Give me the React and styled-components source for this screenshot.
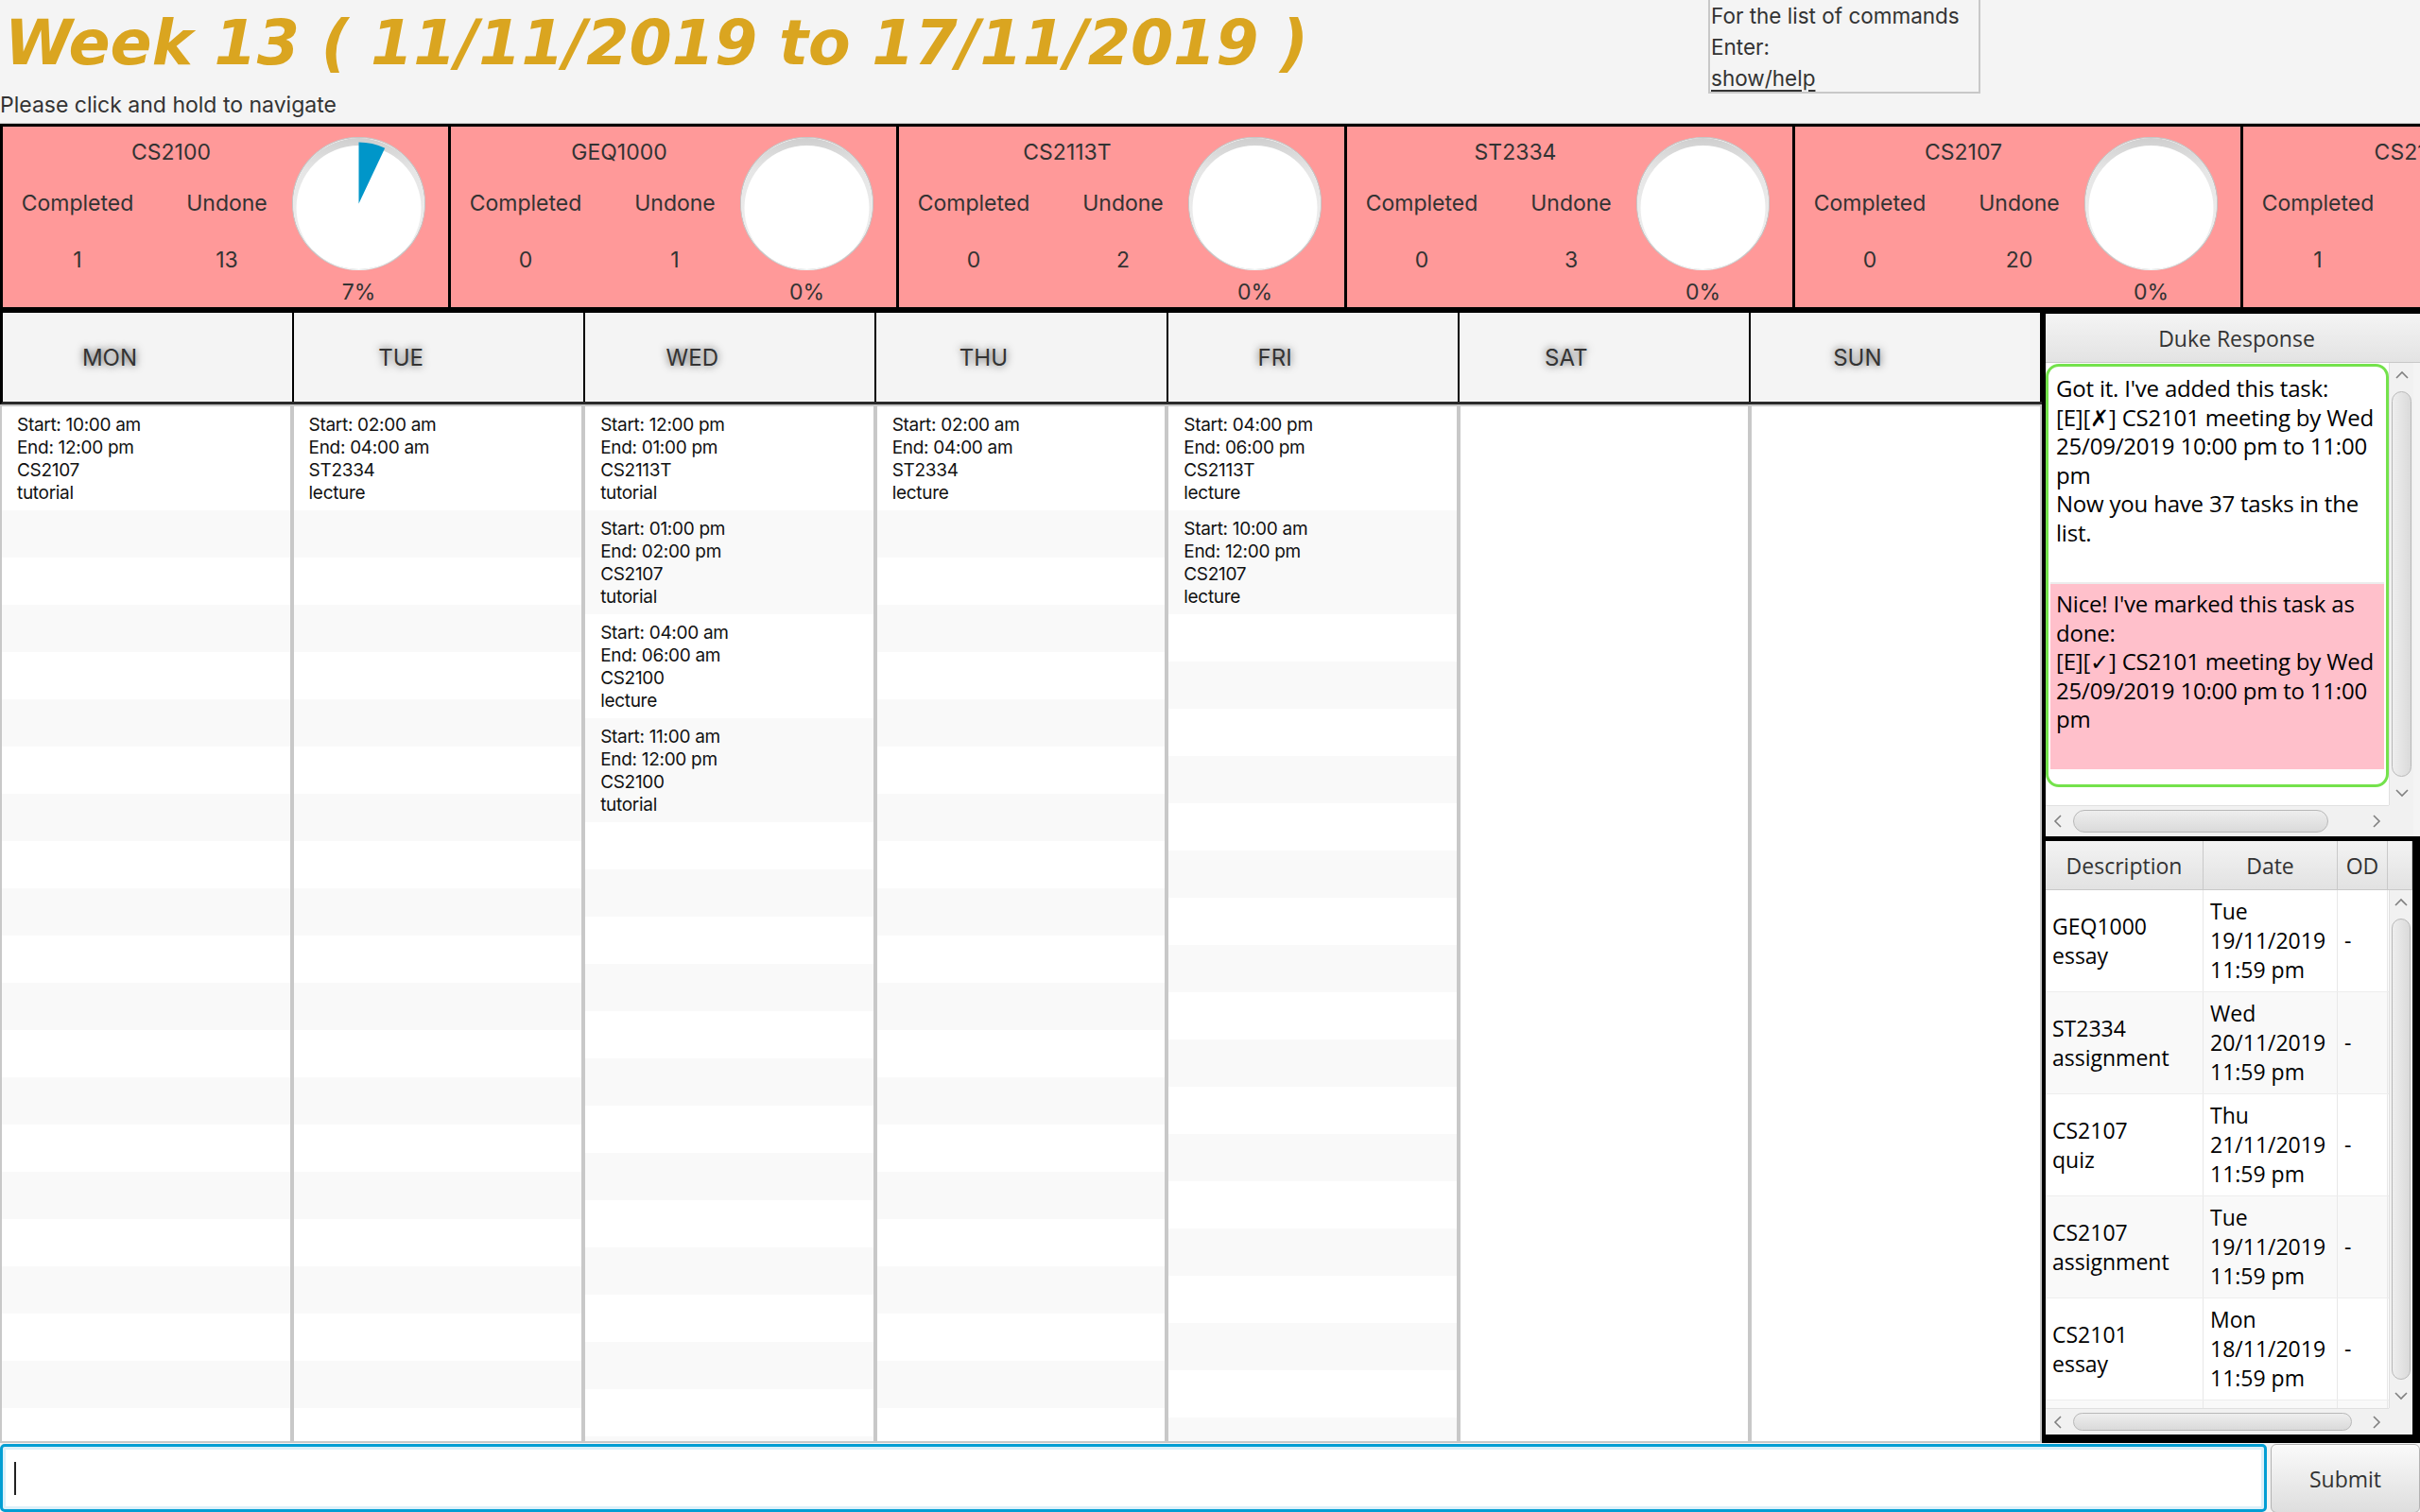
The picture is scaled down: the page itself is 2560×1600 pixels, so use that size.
import React from 'react';
import styled, { createGlobalStyle } from 'styled-components';

const SANS = `"Inter", "Noto Sans", sans-serif`;
const HUMAN = `"Open Sans", "DejaVu Sans", sans-serif`;

const GlobalStyle = createGlobalStyle`
  html, body { margin: 0; padding: 0; background: #f4f4f4; }
  body { width: 2560px; height: 1600px; overflow: hidden; }
  *, *::before, *::after { box-sizing: border-box; }
`;

const Screen = styled.div`
  width: 2560px;
  height: 1600px;
  display: flex;
  flex-direction: column;
  background: #f4f4f4;
  overflow: hidden;
  font-family: ${SANS};
  color: #333;
`;

/* ---------- top bar ---------- */
const TopBar = styled.header`
  height: 130px;
  flex-shrink: 0;
  display: grid;
  grid-template-columns: 1807px 288px;
  align-items: start;
`;
const TitleBlock = styled.div`
  display: flex;
  flex-direction: column;
`;
const Title = styled.h1`
  margin: 8px 0 0 5px;
  font-family: "DejaVu Sans", sans-serif;
  font-weight: bold;
  font-style: italic;
  font-size: 65px;
  line-height: 75px;
  color: #daa520;
  white-space: nowrap;
`;
const Hint = styled.div`
  margin-top: 15px;
  font-size: 23px;
  line-height: 27px;
  color: #333;
  white-space: nowrap;
`;
const HelpBox = styled.div`
  height: 99px;
  border: 2px solid #c8c8c8;
  border-top: none;
  padding: 0 1px;
  font-size: 22.5px;
  line-height: 33px;
  color: #333;
  white-space: nowrap;
`;
const HelpLink = styled.div`
  display: inline-block;
  text-decoration: underline;
  text-underline-offset: 4px;
`;

/* ---------- module cards ---------- */
const CardStrip = styled.section`
  height: 198px;
  flex-shrink: 0;
  display: flex;
  overflow: hidden;
  border-top: 1px solid #c8c8c8;
`;
const Card = styled.div`
  flex: 0 0 474px;
  height: 197px;
  border: 3px solid #000;
  border-right: none;
  background: #ff9999;
  display: flex;
`;
const CardStats = styled.div`
  width: 306px;
  flex-shrink: 0;
  display: flex;
  flex-direction: column;
`;
const CardTitle = styled.div`
  padding: 13px 0 0 50px;
  text-align: center;
  font-size: 23px;
  line-height: 28px;
  white-space: nowrap;
`;
const StatGrid = styled.div`
  display: grid;
  grid-template-columns: 158px 148px;
  row-gap: 32px;
  margin-top: 26px;
  font-size: 23px;
  line-height: 28px;
`;
const StatCell = styled.div`
  text-align: center;
  padding-left: ${p => (p.$second ? 10 : 0)}px;
  white-space: nowrap;
`;
const PieBlock = styled.div`
  width: 141px;
  flex-shrink: 0;
  padding-top: 11px;
  display: flex;
  flex-direction: column;
  align-items: center;
`;
const Percent = styled.div`
  margin-top: 9px;
  font-size: 23px;
  line-height: 28px;
`;

const Pie = ({ pct }) => {
  const c = 70.5;
  const r = 65;
  const a = (pct / 100) * Math.PI * 2;
  const x2 = c + r * Math.sin(a);
  const y2 = c - r * Math.cos(a);
  const large = pct > 50 ? 1 : 0;
  return (
    <svg width="141" height="141" viewBox="0 0 141 141">
      <defs>
        <linearGradient id="crescent" x1="0" y1="0" x2="0" y2="1">
          <stop offset="0" stopColor="#cfcfcf" />
          <stop offset="0.25" stopColor="#e6e6e6" />
          <stop offset="1" stopColor="#f2f2f2" />
        </linearGradient>
      </defs>
      <circle cx={c} cy={c} r="70" fill="#fff" stroke="#c6c6c6" strokeWidth="1.2" />
      <path
        fillRule="evenodd"
        fill="url(#crescent)"
        d={`M ${c - 69.4} ${c} a 69.4 69.4 0 1 0 138.8 0 a 69.4 69.4 0 1 0 -138.8 0 Z M ${c - 66} ${c + 4.5} a 66 66 0 1 0 132 0 a 66 66 0 1 0 -132 0 Z`}
      />
      {pct > 0 && (
        <path
          fill="#0096c9"
          d={`M ${c} ${c} L ${c} ${c - r} A ${r} ${r} 0 ${large} 1 ${x2.toFixed(2)} ${y2.toFixed(2)} Z`}
        />
      )}
    </svg>
  );
};

const modules = [
  { code: 'CS2100', done: 1, undone: 13, pct: 7 },
  { code: 'GEQ1000', done: 0, undone: 1, pct: 0 },
  { code: 'CS2113T', done: 0, undone: 2, pct: 0 },
  { code: 'ST2334', done: 0, undone: 3, pct: 0 },
  { code: 'CS2107', done: 0, undone: 20, pct: 0 },
  { code: 'CS2101', done: 1, undone: 4, pct: 20 },
];

/* ---------- main area ---------- */
const Main = styled.div`
  flex: 1;
  min-height: 0;
  display: flex;
`;
const Calendar = styled.section`
  width: 2160px;
  flex-shrink: 0;
  display: flex;
  flex-direction: column;
`;
const DayHeader = styled.div`
  height: 100px;
  flex-shrink: 0;
  display: grid;
  grid-template-columns: repeat(7, 1fr);
  border-top: 3px solid #000;
  border-bottom: 3px solid #2a2a2a;
  border-left: 3px solid #000;
`;
const DayHead = styled.div`
  display: flex;
  align-items: center;
  border-right: 2px solid #000;
  background: #f4f4f4;
`;
const DayLabel = styled.span`
  width: 226px;
  text-align: center;
  font-size: 24px;
  color: #333;
  text-shadow: 0 0 8px rgba(0, 0, 0, 0.7);
`;
const DayBody = styled.div`
  flex: 1;
  min-height: 0;
  display: grid;
  grid-template-columns: repeat(7, 1fr);
`;
const DayList = styled.div`
  border: 2px solid #c8c8c8;
  background: #fff;
  overflow: hidden;
  display: flex;
  flex-direction: column;
`;
const SlotRow = styled.div`
  flex-shrink: 0;
  height: ${p => (p.$event ? 110 : 50)}px;
  background: ${p => (p.$odd ? '#f9f9f9' : '#fff')};
  padding: 8px 16px 6px;
  font-size: 19px;
  line-height: 24px;
  letter-spacing: -0.3px;
  color: #111;
  white-space: pre-line;
`;

const days = [
  { name: 'MON', events: [['10:00 am', '12:00 pm', 'CS2107', 'tutorial']] },
  { name: 'TUE', events: [['02:00 am', '04:00 am', 'ST2334', 'lecture']] },
  {
    name: 'WED',
    events: [
      ['12:00 pm', '01:00 pm', 'CS2113T', 'tutorial'],
      ['01:00 pm', '02:00 pm', 'CS2107', 'tutorial'],
      ['04:00 am', '06:00 am', 'CS2100', 'lecture'],
      ['11:00 am', '12:00 pm', 'CS2100', 'tutorial'],
    ],
  },
  { name: 'THU', events: [['02:00 am', '04:00 am', 'ST2334', 'lecture']] },
  {
    name: 'FRI',
    events: [
      ['04:00 pm', '06:00 pm', 'CS2113T', 'lecture'],
      ['10:00 am', '12:00 pm', 'CS2107', 'lecture'],
    ],
  },
  { name: 'SAT', events: [] },
  { name: 'SUN', events: [] },
];

/* ---------- side panel ---------- */
const SidePanel = styled.aside`
  width: 400px;
  flex-shrink: 0;
  display: flex;
  flex-direction: column;
  overflow: hidden;
`;
const DukeBox = styled.div`
  width: 412px;
  height: 557px;
  flex-shrink: 0;
  border: 4px solid #000;
  border-bottom: none;
  display: flex;
  flex-direction: column;
  background: #f4f4f4;
`;
const DukeHeader = styled.div`
  height: 52px;
  flex-shrink: 0;
  display: flex;
  align-items: center;
  justify-content: center;
  background: linear-gradient(#f4f4f4, #e3e3e3);
  border-bottom: 1px solid #c8c8c8;
  font-family: ${HUMAN};
  font-size: 23px;
  color: #333;
`;
const DukeScroll = styled.div`
  flex: 1;
  min-height: 0;
  display: grid;
  grid-template-columns: 363px 26px 1fr;
  grid-template-rows: 1fr 33px;
`;
const Viewport = styled.div`
  background: #fff;
  overflow: hidden;
`;
const MessageList = styled.div`
  height: 448px;
  margin-top: 1px;
  border: 3px solid #74e24c;
  border-radius: 14px;
  padding: 2px;
  background: #fff;
  overflow: hidden;
`;
const Message = styled.div`
  background: ${p => (p.$tone === 'pink' ? '#ffc0cb' : '#fff')};
  padding: 6px 4px 37px 6px;
  font-family: ${HUMAN};
  font-size: 24px;
  line-height: 30.5px;
  letter-spacing: -0.2px;
  color: #000;
  & + & {
    border-top: 2px solid #ececec;
  }
`;
const Line = styled.div`
  white-space: nowrap;
`;

const VTrack = styled.div`
  display: flex;
  flex-direction: column;
  align-items: stretch;
  background: #f1f1f1;
  border-left: 1px solid #e0e0e0;
`;
const VArrow = styled.div`
  flex: 0 0 26px;
  display: flex;
  align-items: center;
  justify-content: center;
`;
const VThumb = styled.div`
  flex: 1;
  margin: 4px 2px;
  border: 1.5px solid #b8b8b8;
  border-radius: 12px;
  background: linear-gradient(90deg, #eeeeee, #dadada);
`;
const HTrack = styled.div`
  display: flex;
  align-items: stretch;
  background: #f1f1f1;
  border-top: 1px solid #e0e0e0;
`;
const HArrow = styled.div`
  flex: 0 0 26px;
  display: flex;
  align-items: center;
  justify-content: center;
`;
const HLane = styled.div`
  flex: 1;
  padding: 4px 3px;
`;
const HThumb = styled.div`
  height: 100%;
  width: ${p => p.$len}px;
  border: 1.5px solid #b8b8b8;
  border-radius: 12px;
  background: linear-gradient(#eeeeee, #dadada);
`;
const Corner = styled.div`
  background: #f1f1f1;
`;

const Chevron = ({ dir }) => {
  const vertical = dir === 'up' || dir === 'down';
  const pts = {
    up: '1,8 7,2 13,8',
    down: '1,2 7,8 13,2',
    left: '8,1 2,7 8,13',
    right: '2,1 8,7 2,13',
  }[dir];
  return (
    <svg
      width={vertical ? 14 : 10}
      height={vertical ? 10 : 14}
      viewBox={vertical ? '0 0 14 10' : '0 0 10 14'}
    >
      <polyline points={pts} fill="none" stroke="#808080" strokeWidth="1.6" />
    </svg>
  );
};

const VScroll = () => (
  <VTrack>
    <VArrow><Chevron dir="up" /></VArrow>
    <VThumb />
    <VArrow><Chevron dir="down" /></VArrow>
  </VTrack>
);
const HScroll = ({ len }) => (
  <HTrack>
    <HArrow><Chevron dir="left" /></HArrow>
    <HLane><HThumb $len={len} /></HLane>
    <HArrow><Chevron dir="right" /></HArrow>
  </HTrack>
);

const TableBox = styled.div`
  height: 642px;
  flex-shrink: 0;
  border: solid #000;
  border-width: 5px 8px 9px 4px;
  display: flex;
  flex-direction: column;
  background: #fff;
  font-family: ${HUMAN};
`;
const THead = styled.div`
  height: 52px;
  flex-shrink: 0;
  display: grid;
  grid-template-columns: 167px 142px 53px 1fr;
`;
const TH = styled.div`
  display: flex;
  align-items: center;
  justify-content: center;
  background: linear-gradient(#f3f3f3, #e2e2e2);
  border-right: 1px solid #c9c9c9;
  border-bottom: 1px solid #c9c9c9;
  font-size: 23px;
  color: #333;
`;
const TBody = styled.div`
  flex: 1;
  min-height: 0;
  display: grid;
  grid-template-columns: 1fr 25px;
`;
const TRows = styled.div`
  overflow: hidden;
`;
const TR = styled.div`
  height: 108px;
  display: grid;
  grid-template-columns: 167px 142px 53px;
  background: ${p => (p.$odd ? '#f9f9f9' : '#fff')};
  border-bottom: 1px solid #ededed;
`;
const TD = styled.div`
  display: flex;
  flex-direction: column;
  justify-content: center;
  padding: 0 4px 0 7px;
  border-right: 1px solid #e8e8e8;
  font-size: 23px;
  line-height: 31px;
  color: #000;
  white-space: nowrap;
  overflow: hidden;
`;
const TFoot = styled.div`
  height: 28px;
  flex-shrink: 0;
  display: grid;
  grid-template-columns: 1fr 25px;
`;

const deadlines = [
  { desc: ['GEQ1000', 'essay'], date: ['Tue', '19/11/2019', '11:59 pm'] },
  { desc: ['ST2334', 'assignment'], date: ['Wed', '20/11/2019', '11:59 pm'] },
  { desc: ['CS2107', 'quiz'], date: ['Thu', '21/11/2019', '11:59 pm'] },
  { desc: ['CS2107', 'assignment'], date: ['Tue', '19/11/2019', '11:59 pm'] },
  { desc: ['CS2101', 'essay'], date: ['Mon', '18/11/2019', '11:59 pm'] },
  { desc: ['CS2113T', 'project'], date: ['Wed', '20/11/2019', '11:59 pm'] },
];

/* ---------- input bar ---------- */
const InputBar = styled.div`
  height: 73px;
  flex-shrink: 0;
  display: flex;
  gap: 4px;
  padding-top: 1px;
`;
const CommandField = styled.div`
  width: 2398px;
  flex-shrink: 0;
  border: 3px solid #039ed3;
  border-radius: 5px;
  background: #fff;
  box-shadow: inset 0 0 0 3px #dcf0f9;
  display: flex;
  align-items: center;
  padding-left: 12px;
`;
const Caret = styled.span`
  width: 2px;
  height: 35px;
  background: #222;
`;
const SubmitButton = styled.button`
  flex: 1;
  height: 73px;
  border: 1.5px solid #b3b3b3;
  border-radius: 6px;
  background: linear-gradient(#fafafa, #dedede);
  box-shadow: inset 0 1px 0 #fff;
  font-family: ${HUMAN};
  font-size: 23px;
  color: #333;
  padding: 0;
`;

export default function App() {
  return (
    <>
      <GlobalStyle />
      <Screen>
        <TopBar>
          <TitleBlock>
            <Title>Week 13 ( 11/11/2019 to 17/11/2019 )</Title>
            <Hint>Please click and hold to navigate</Hint>
          </TitleBlock>
          <HelpBox>
            <div>For the list of commands</div>
            <div>Enter:</div>
            <HelpLink>show/help</HelpLink>
          </HelpBox>
        </TopBar>

        <CardStrip>
          {modules.map(m => (
            <Card key={m.code}>
              <CardStats>
                <CardTitle>{m.code}</CardTitle>
                <StatGrid>
                  <StatCell>Completed</StatCell>
                  <StatCell $second>Undone</StatCell>
                  <StatCell>{m.done}</StatCell>
                  <StatCell $second>{m.undone}</StatCell>
                </StatGrid>
              </CardStats>
              <PieBlock>
                <Pie pct={m.pct} />
                <Percent>{m.pct}%</Percent>
              </PieBlock>
            </Card>
          ))}
        </CardStrip>

        <Main>
          <Calendar>
            <DayHeader>
              {days.map(d => (
                <DayHead key={d.name}>
                  <DayLabel>{d.name}</DayLabel>
                </DayHead>
              ))}
            </DayHeader>
            <DayBody>
              {days.map(d => {
                const total = d.events.length ? 26 : 0;
                const rows = [];
                for (let i = 0; i < total; i++) {
                  const ev = d.events[i];
                  rows.push(
                    <SlotRow key={i} $event={!!ev} $odd={i % 2 === 1}>
                      {ev ? `Start: ${ev[0]}\nEnd: ${ev[1]}\n${ev[2]}\n${ev[3]}` : ''}
                    </SlotRow>
                  );
                }
                return <DayList key={d.name}>{rows}</DayList>;
              })}
            </DayBody>
          </Calendar>

          <SidePanel>
            <DukeBox>
              <DukeHeader>Duke Response</DukeHeader>
              <DukeScroll>
                <Viewport>
                  <MessageList>
                    <Message>
                      <Line>Got it. I've added this task:</Line>
                      <Line>[E][✗] CS2101 meeting by Wed</Line>
                      <Line>25/09/2019 10:00 pm to 11:00</Line>
                      <Line>pm</Line>
                      <Line>Now you have 37 tasks in the</Line>
                      <Line>list.</Line>
                    </Message>
                    <Message $tone="pink">
                      <Line>Nice! I've marked this task as</Line>
                      <Line>done:</Line>
                      <Line>[E][✓] CS2101 meeting by Wed</Line>
                      <Line>25/09/2019 10:00 pm to 11:00</Line>
                      <Line>pm</Line>
                    </Message>
                  </MessageList>
                </Viewport>
                <VScroll />
                <div />
                <HScroll len={270} />
                <Corner />
                <div />
              </DukeScroll>
            </DukeBox>

            <TableBox>
              <THead>
                <TH>Description</TH>
                <TH>Date</TH>
                <TH>OD</TH>
                <TH />
              </THead>
              <TBody>
                <TRows>
                  {deadlines.map((r, i) => (
                    <TR key={i} $odd={i % 2 === 1}>
                      <TD>{r.desc.map(t => <div key={t}>{t}</div>)}</TD>
                      <TD>{r.date.map(t => <div key={t}>{t}</div>)}</TD>
                      <TD>-</TD>
                    </TR>
                  ))}
                </TRows>
                <VScroll />
              </TBody>
              <TFoot>
                <HScroll len={295} />
                <Corner />
              </TFoot>
            </TableBox>
          </SidePanel>
        </Main>

        <InputBar>
          <CommandField>
            <Caret />
          </CommandField>
          <SubmitButton type="button">Submit</SubmitButton>
        </InputBar>
      </Screen>
    </>
  );
}
